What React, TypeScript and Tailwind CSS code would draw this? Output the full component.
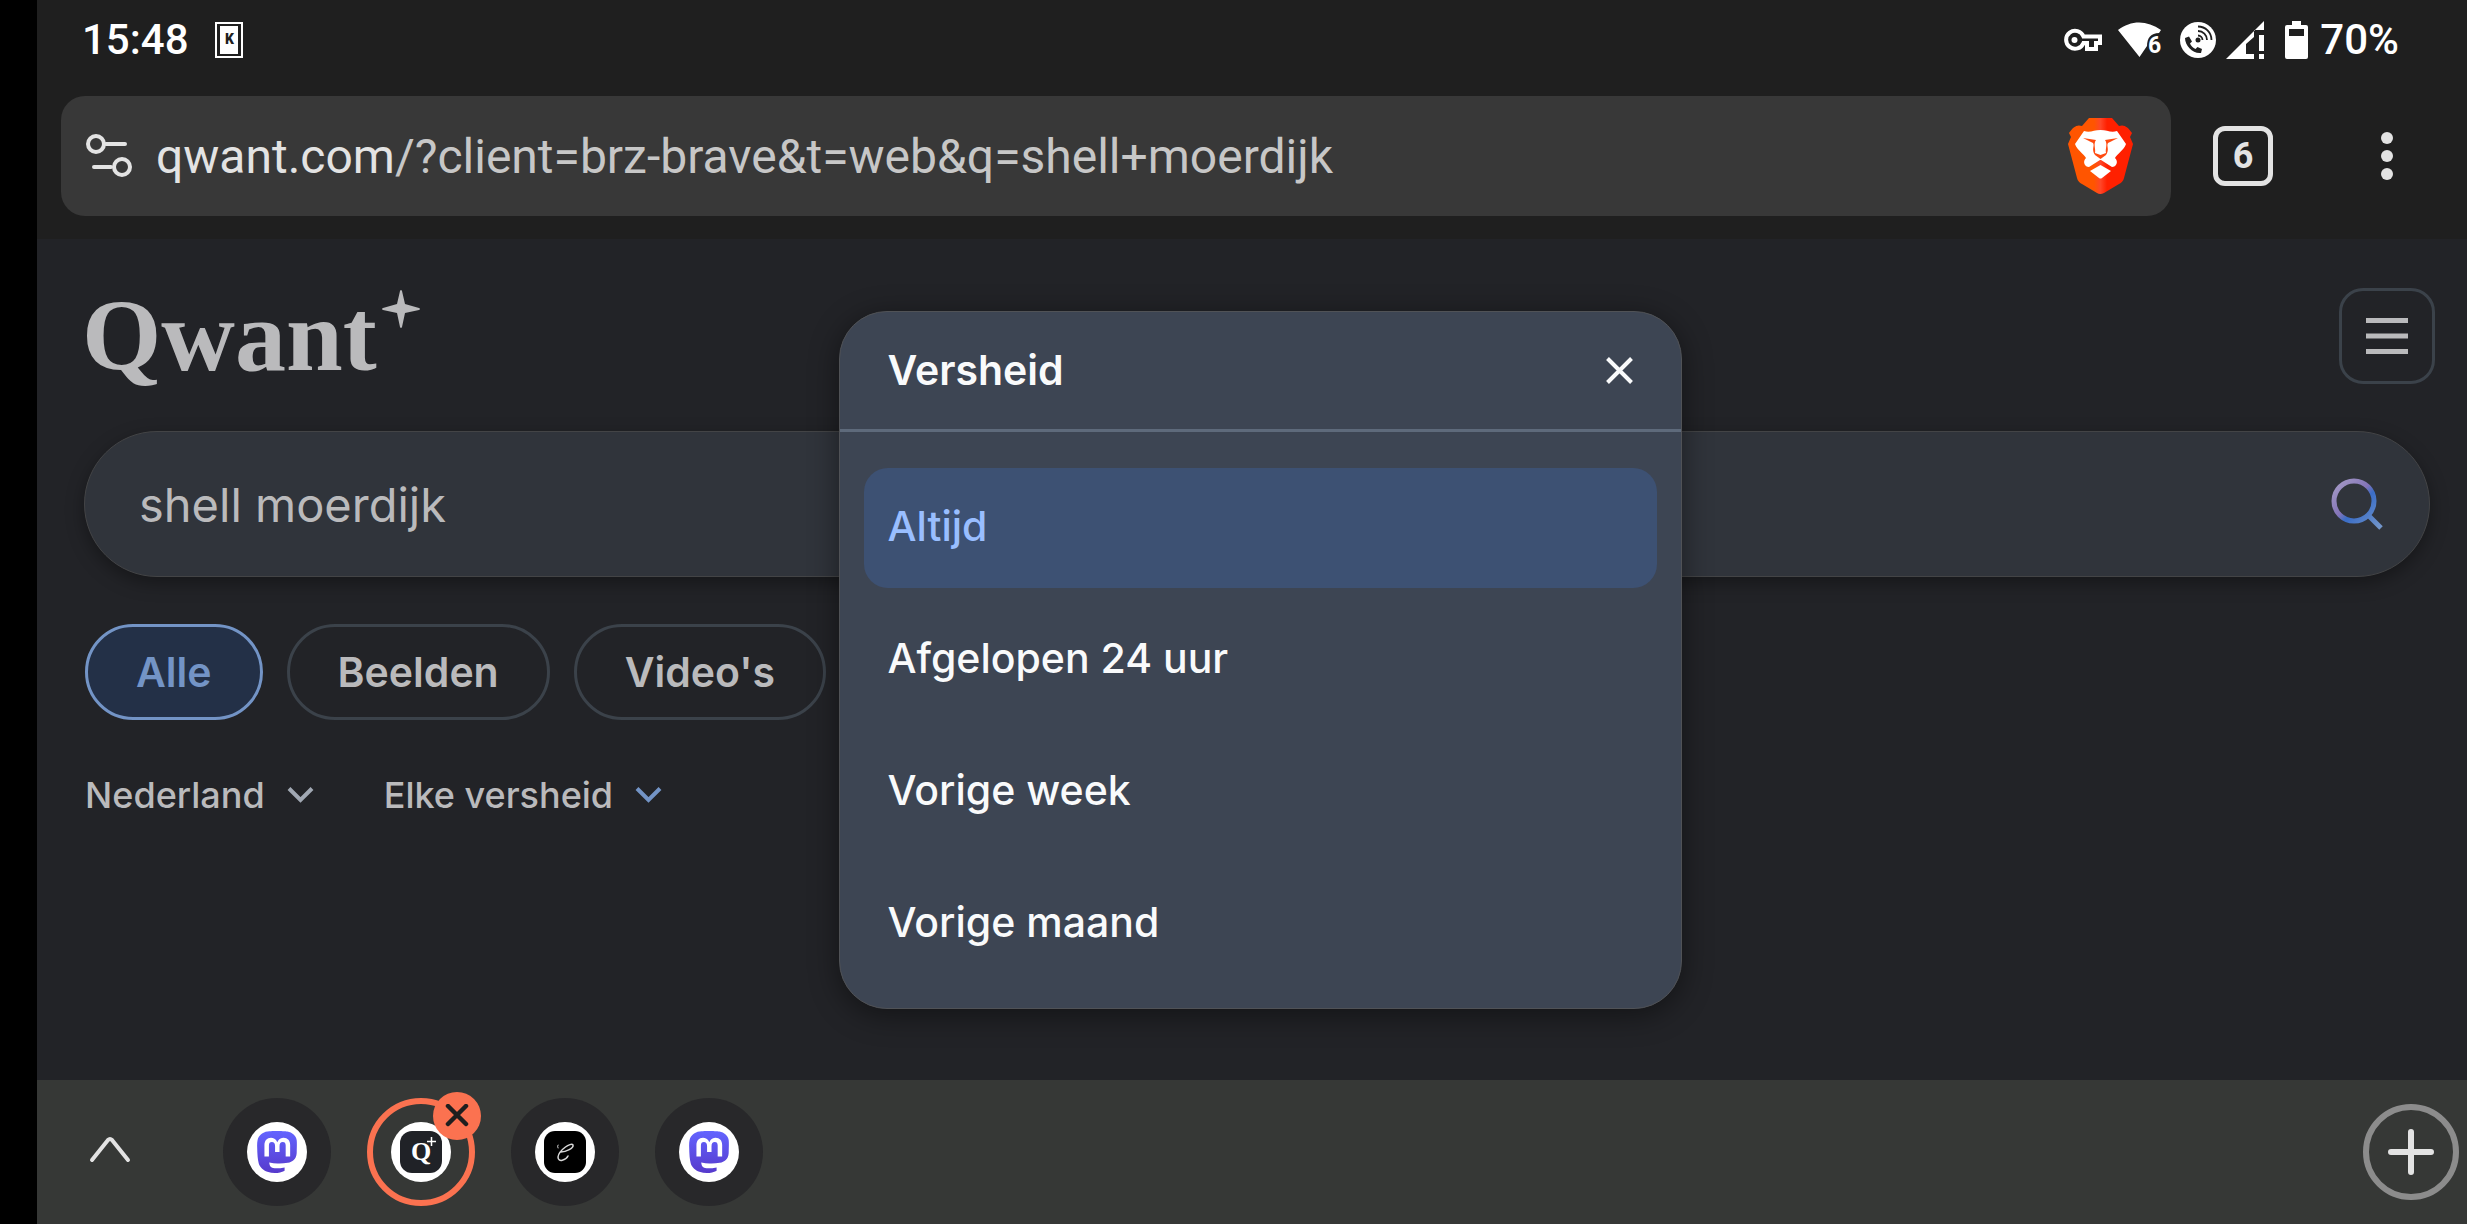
import React from "react";
import { SiMastodon } from "react-icons/si";

function KeyIcon() {
  return (
    <svg className="h-[24px] w-[40px]" viewBox="0 0 40 24" fill="none" stroke="#fff" strokeWidth="4" aria-hidden="true">
      <path d="M20.500 8.500A9 9 0 1 0 20.500 15H24v6h9v-6h4V8.500Z" />
      <circle cx="11.500" cy="12" r="3" fill="#fff" stroke="none" />
    </svg>
  );
}

function WifiIcon() {
  return (
    <svg className="h-[36px] w-[46px]" viewBox="0 0 46 36" aria-hidden="true">
      <path d="M1 8C14-2 30-2 44 8L42 11C34 11 30 16 30 24L22.500 35Z" fill="#fff" />
      <text x="31" y="31" fontFamily="Roboto" fontWeight="700" fontSize="23" fill="#fff">6</text>
    </svg>
  );
}

function CallIcon() {
  return (
    <svg className="h-[36px] w-[36px]" viewBox="0 0 36 36" fill="none" aria-hidden="true">
      <circle cx="18" cy="18" r="18" fill="#fff" />
      <path d="M5 16l4-1.500 3 5-2 2c1 2.500 3 4.500 5.500 5.500l2-2 4.500 2-1 4c-8 1-16-7-16-15Z" fill="#1f1f1f" />
      <circle cx="18" cy="18" r="2.500" fill="#1f1f1f" />
      <path d="M18 13.500a4.500 4.500 0 0 1 4.500 4.500M18 9a9 9 0 0 1 9 9M18 4.500A13.500 13.500 0 0 1 31.500 18" stroke="#1f1f1f" strokeWidth="1.800" />
    </svg>
  );
}

function SignalIcon() {
  return (
    <svg className="h-[38px] w-[38px]" viewBox="0 0 38 38" fill="#fff" aria-hidden="true">
      <path d="M0 38L38 0V9H28V16L20 23V33H28V38Z" />
      <path d="M33 14h5v16h-5zM33 33h5v5h-5z" />
    </svg>
  );
}

function BatteryIcon() {
  return (
    <svg className="h-[38px] w-[23px]" viewBox="0 0 23 38" fill="#fff" aria-hidden="true">
      <path fillRule="evenodd" d="M7 0h9v4h5a2 2 0 0 1 2 2v30a2 2 0 0 1-2 2H2a2 2 0 0 1-2-2V6a2 2 0 0 1 2-2h5ZM4 8v7h15V8Z" />
    </svg>
  );
}

function BraveIcon() {
  return (
    <svg className="h-[76px] w-[65px]" viewBox="0 0 65 76" aria-hidden="true">
      <defs>
        <linearGradient id="brave" x1="0" x2="1" y1="0" y2="0">
          <stop offset="0.400" stopColor="#ff5500" />
          <stop offset="0.500" stopColor="#ff4628" />
          <stop offset="0.600" stopColor="#ff2000" />
        </linearGradient>
      </defs>
      <path fill="url(#brave)" d="M21 0H44L51 8C56 6 60 9 64 15L62 19 65 26 56 60Q55 64 51 66L36 75Q32 77 29 75L14 66Q10 64 9 60L0 26 3 19 1 15C5 9 9 6 14 8Z" />
      <path fill="#fff" d="M16 13C22 15 26 12 32.500 12S43 15 49 13L58 26C56 32 49 36 47 40C51 44 48 49 44 49L33 42 32 42 21 49C17 49 14 44 18 40C16 36 9 32 7 26Z" />
      <path fill="#ff4a10" d="M15 20L28 22C25 26 28 31 27 35L32.500 37 38 35C37 31 40 26 37 22L50 20 40 25C38 28 42 31 38 37L32.500 41 27 37C23 31 27 28 25 25Z" />
      <path fill="#fff" d="M22 53L32.500 47 43 53 34 60Q32.500 61 31 60Z" />
    </svg>
  );
}

function StatusBar() {
  return (
    <div className="flex h-20 items-center justify-between pr-[68px] pl-[45px] text-[42px] leading-none font-medium text-white">
      <div className="flex items-center gap-[26px]">
        <span>15:48</span>
        <svg className="h-[36px] w-[28px]" viewBox="0 0 28 36" aria-hidden="true">
          <path d="M1 1h26v34H1z" fill="none" stroke="#fff" strokeWidth="2" />
          <path d="M5 4h18v28H5z" fill="#fff" />
          <text x="14.500" y="22" textAnchor="middle" fontFamily="Roboto" fontWeight="900" fontSize="14" fill="#1f1f1f">K</text>
        </svg>
      </div>
      <div className="flex items-center">
        <KeyIcon />
        <span className="w-[14px]" />
        <WifiIcon />
        <span className="w-[17px]" />
        <CallIcon />
        <span className="w-[10px]" />
        <SignalIcon />
        <span className="w-[21px]" />
        <BatteryIcon />
        <span className="ml-3">70%</span>
      </div>
    </div>
  );
}

function AddressBar() {
  return (
    <div className="flex h-[159px] items-start pt-4 pr-[68px] pl-6">
      <div className="flex h-[120px] flex-1 items-center rounded-3xl bg-[#383838] pr-[38px] pl-[25px]">
        <button aria-label="Site-informatie" className="mr-6">
          <svg className="h-[44px] w-[46px]" viewBox="0 0 46 44" fill="none" stroke="#e3e3e3" strokeWidth="4" strokeLinecap="round" aria-hidden="true">
            <circle cx="10" cy="10" r="8" />
            <path d="M20 10h19M8 33h17" />
            <circle cx="36" cy="33" r="8" />
          </svg>
        </button>
        <div className="flex-1 pt-[2px] text-[48px] leading-none text-[#c7c7c7]">
          <span className="text-[#e3e3e3]">qwant.com</span>/?client=brz-brave&amp;t=web&amp;q=shell+moerdijk
        </div>
        <button aria-label="Brave Shields"><BraveIcon /></button>
      </div>
      <button aria-label="6 tabbladen" className="mt-[30px] ml-[42px] flex size-[60px] items-center justify-center rounded-xl border-[5px] border-[#e3e3e3] text-[36px] leading-none font-bold text-[#e3e3e3]">6</button>
      <button aria-label="Meer opties" className="mt-[36px] ml-[102px] flex w-6 flex-col items-center gap-[6px]">
        <span className="size-3 rounded-full bg-[#e3e3e3]" />
        <span className="size-3 rounded-full bg-[#e3e3e3]" />
        <span className="size-3 rounded-full bg-[#e3e3e3]" />
      </button>
    </div>
  );
}

function Chevron({ color }: { color: string }) {
  return (
    <svg className="h-[18px] w-[27px]" viewBox="0 0 27 18" fill="none" stroke={color} strokeWidth="4" aria-hidden="true">
      <path d="M2 2.500L13.500 14 25 2.500" />
    </svg>
  );
}

function SearchPage() {
  return (
    <div className="flex-1 pt-[49px] pr-8 pl-[47px]">
      <header className="flex h-24 items-center justify-between">
        <a href="#" aria-label="Qwant" className="-ml-[2px] flex items-start text-[#bababc]">
          <span className="font-['Liberation_Serif',serif] text-[102px] leading-[92px] font-bold">Qwant</span>
          <svg className="ml-[5px] h-[38px] w-[38px]" viewBox="0 0 38 38" fill="currentColor" aria-hidden="true">
            <path d="M18 1Q19-1 20 1L23 14 37 18Q39 19 37 20L23 23 20 37Q19 39 18 37L15 23 1 20Q-1 19 1 18L15 14Z" />
          </svg>
        </a>
        <button aria-label="Menu" className="flex size-24 items-center justify-center rounded-3xl border-[3px] border-[#3b424a]">
          <svg className="h-9 w-[42px]" viewBox="0 0 42 36" stroke="#bababc" strokeWidth="5" aria-hidden="true">
            <path d="M0 2.500h42M0 18h42M0 33.500h42" />
          </svg>
        </button>
      </header>
      <form className="mt-[47px] mr-[5px] flex h-[146px] items-center rounded-full border border-[#434446] bg-[#30343b] pr-[46px] pl-[54px] shadow-[0_6px_18px_rgba(0,0,0,0.35)]">
        <input aria-label="Zoeken" defaultValue="shell moerdijk" className="min-w-0 flex-1 bg-transparent pt-[2px] text-[47px] leading-[60px] text-[#bababc] outline-none" />
        <button type="button" aria-label="Zoek">
          <svg className="size-[52px]" viewBox="0 0 52 52" fill="none" stroke="url(#lens)" strokeWidth="5" aria-hidden="true">
            <defs>
              <linearGradient id="lens" gradientUnits="userSpaceOnUse" x1="6" y1="6" x2="52" y2="52">
                <stop offset="0" stopColor="#a196c4" />
                <stop offset="0.350" stopColor="#8474b8" />
                <stop offset="0.480" stopColor="#3a6dc6" />
                <stop offset="1" stopColor="#7a9bcb" />
              </linearGradient>
            </defs>
            <circle cx="23" cy="23" r="20" />
            <path d="M37 37L50 50" />
          </svg>
        </button>
      </form>
      <nav className="mt-[47px] ml-px flex gap-6 text-[41px] leading-[50px] font-semibold">
        <button className="h-24 rounded-full border-[3px] border-[#7394c6] bg-[#233047] px-12 text-[#7394c6]">Alle</button>
        <button className="h-24 rounded-full border-[3px] border-[#3b424a] px-12 text-[#bababc]">Beelden</button>
        <button className="h-24 rounded-full border-[3px] border-[#3b424a] px-12 text-[#bababc]">Video's</button>
      </nav>
      <div className="mt-[52px] ml-px flex gap-[70px] text-[36px] leading-[46px] font-medium text-[#bababc]">
        <button className="flex items-center gap-[22px]">Nederland<Chevron color="#a1a8b3" /></button>
        <button className="flex items-center gap-[22px]">Elke versheid<Chevron color="#7394c6" /></button>
      </div>
    </div>
  );
}

function FreshnessDialog() {
  return (
    <div role="dialog" aria-labelledby="dialog-title" className="w-[843px] rounded-[48px] border border-[#505256] bg-[#3d4553] font-medium text-[#f9fafb] shadow-[0_6px_30px_rgba(0,0,0,0.45)]">
      <div className="flex h-[120px] items-center justify-between border-b-[3px] border-[#5e6a7b] px-12 text-[41px]">
        <h2 id="dialog-title" className="font-semibold">Versheid</h2>
        <button aria-label="Sluiten">
          <svg className="size-[27px]" viewBox="0 0 27 27" stroke="currentColor" strokeWidth="4" aria-hidden="true">
            <path d="M1.500 1.500l24 24M25.500 1.500l-24 24" />
          </svg>
        </button>
      </div>
      <div className="flex flex-col gap-3 px-6 pt-9 pb-6 text-[41px]">
        <button className="h-[120px] rounded-3xl bg-[#3d5173] px-6 pb-[2px] text-left text-[#99beff]">Altijd</button>
        <button className="h-[120px] rounded-3xl px-6 pb-[2px] text-left">Afgelopen 24 uur</button>
        <button className="h-[120px] rounded-3xl px-6 pb-[2px] text-left">Vorige week</button>
        <button className="h-[120px] rounded-3xl px-6 pb-[2px] text-left">Vorige maand</button>
      </div>
    </div>
  );
}

function Disc({ children }: { children: React.ReactNode }) {
  return <span className="flex size-[60px] items-center justify-center rounded-full bg-white">{children}</span>;
}

function MastodonTab() {
  return (
    <button aria-label="Mastodon" className="flex size-[108px] items-center justify-center rounded-full bg-[#28282a]">
      <Disc>
        <svg className="size-0" aria-hidden="true">
          <linearGradient id="masto" x1="0" x2="0" y1="0" y2="1">
            <stop offset="0" stopColor="#6364ff" />
            <stop offset="1" stopColor="#563acc" />
          </linearGradient>
        </svg>
        <SiMastodon className="size-[42px]" fill="url(#masto)" />
      </Disc>
    </button>
  );
}

function TabStrip() {
  return (
    <div className="flex h-36 items-center bg-[#363836] pr-2 pl-[50px]">
      <button aria-label="Tabbladen uitvouwen" className="pb-[6px]">
        <svg className="h-[30px] w-[46px]" viewBox="0 0 46 30" fill="none" stroke="#e3e3e3" strokeWidth="4" strokeLinecap="round" strokeLinejoin="round" aria-hidden="true">
          <path d="M5 26L21 6Q23 4 25 6L41 26" />
        </svg>
      </button>
      <div className="ml-[90px] flex gap-9">
        <MastodonTab />
        <div className="relative">
          <button aria-label="Qwant" className="flex size-[108px] items-center justify-center rounded-full border-[6px] border-[#fb7250]">
            <Disc>
              <span className="relative flex size-[42px] items-center justify-center rounded-xl bg-[#202227] font-['Liberation_Serif',serif] text-[26px] leading-none font-bold text-white">
                Q
                <svg className="absolute top-[6px] right-[6px] size-[9px]" viewBox="0 0 9 9" stroke="#fff" strokeWidth="1.500" aria-hidden="true"><path d="M4.500 0v9M0 4.500h9" /></svg>
              </span>
            </Disc>
          </button>
          <button aria-label="Tabblad sluiten" className="absolute -top-[6px] -right-[6px] flex size-12 items-center justify-center rounded-full bg-[#fb7250]">
            <svg className="size-6" viewBox="0 0 24 24" stroke="#1f1f1f" strokeWidth="4.500" strokeLinecap="round" aria-hidden="true"><path d="M3 2l18 18M21 2L3 20" /></svg>
          </button>
        </div>
        <button aria-label="Tabblad" className="flex size-[108px] items-center justify-center rounded-full bg-[#28282a]">
          <Disc>
            <svg className="size-[42px]" viewBox="0 0 42 42" fill="none" stroke="#d8d8d8" strokeLinecap="round" aria-hidden="true">
              <rect width="42" height="42" rx="11" fill="#000" stroke="none" />
              <path d="M14 14q-1 1 0 3" strokeWidth="1" />
              <path d="M17 21C22 21 30 17 29 14C27 11 15 19 14 26C14 32 22 29 24 25" strokeWidth="1.500" />
            </svg>
          </Disc>
        </button>
        <MastodonTab />
      </div>
      <button aria-label="Nieuw tabblad" className="ml-auto flex size-24 items-center justify-center rounded-full border-[6px] border-[#8c8c8c]">
        <svg className="size-[46px]" viewBox="0 0 46 46" stroke="#e3e3e3" strokeWidth="6" strokeLinecap="round" aria-hidden="true"><path d="M23 3v40M3 23h40" /></svg>
      </button>
    </div>
  );
}

export default function App() {
  return (
    <div className="flex min-h-screen bg-black pl-[37px]">
      <div className="flex flex-1 flex-col bg-[#1f1f1f] font-['Roboto',sans-serif]">
        <StatusBar />
        <AddressBar />
        <main className="relative flex flex-1 flex-col bg-[#222327] font-['Inter','Liberation_Sans',sans-serif]">
          <SearchPage />
          <div className="absolute inset-0 flex items-start justify-center pt-[72px] pl-4">
            <FreshnessDialog />
          </div>
        </main>
        <TabStrip />
      </div>
    </div>
  );
}
